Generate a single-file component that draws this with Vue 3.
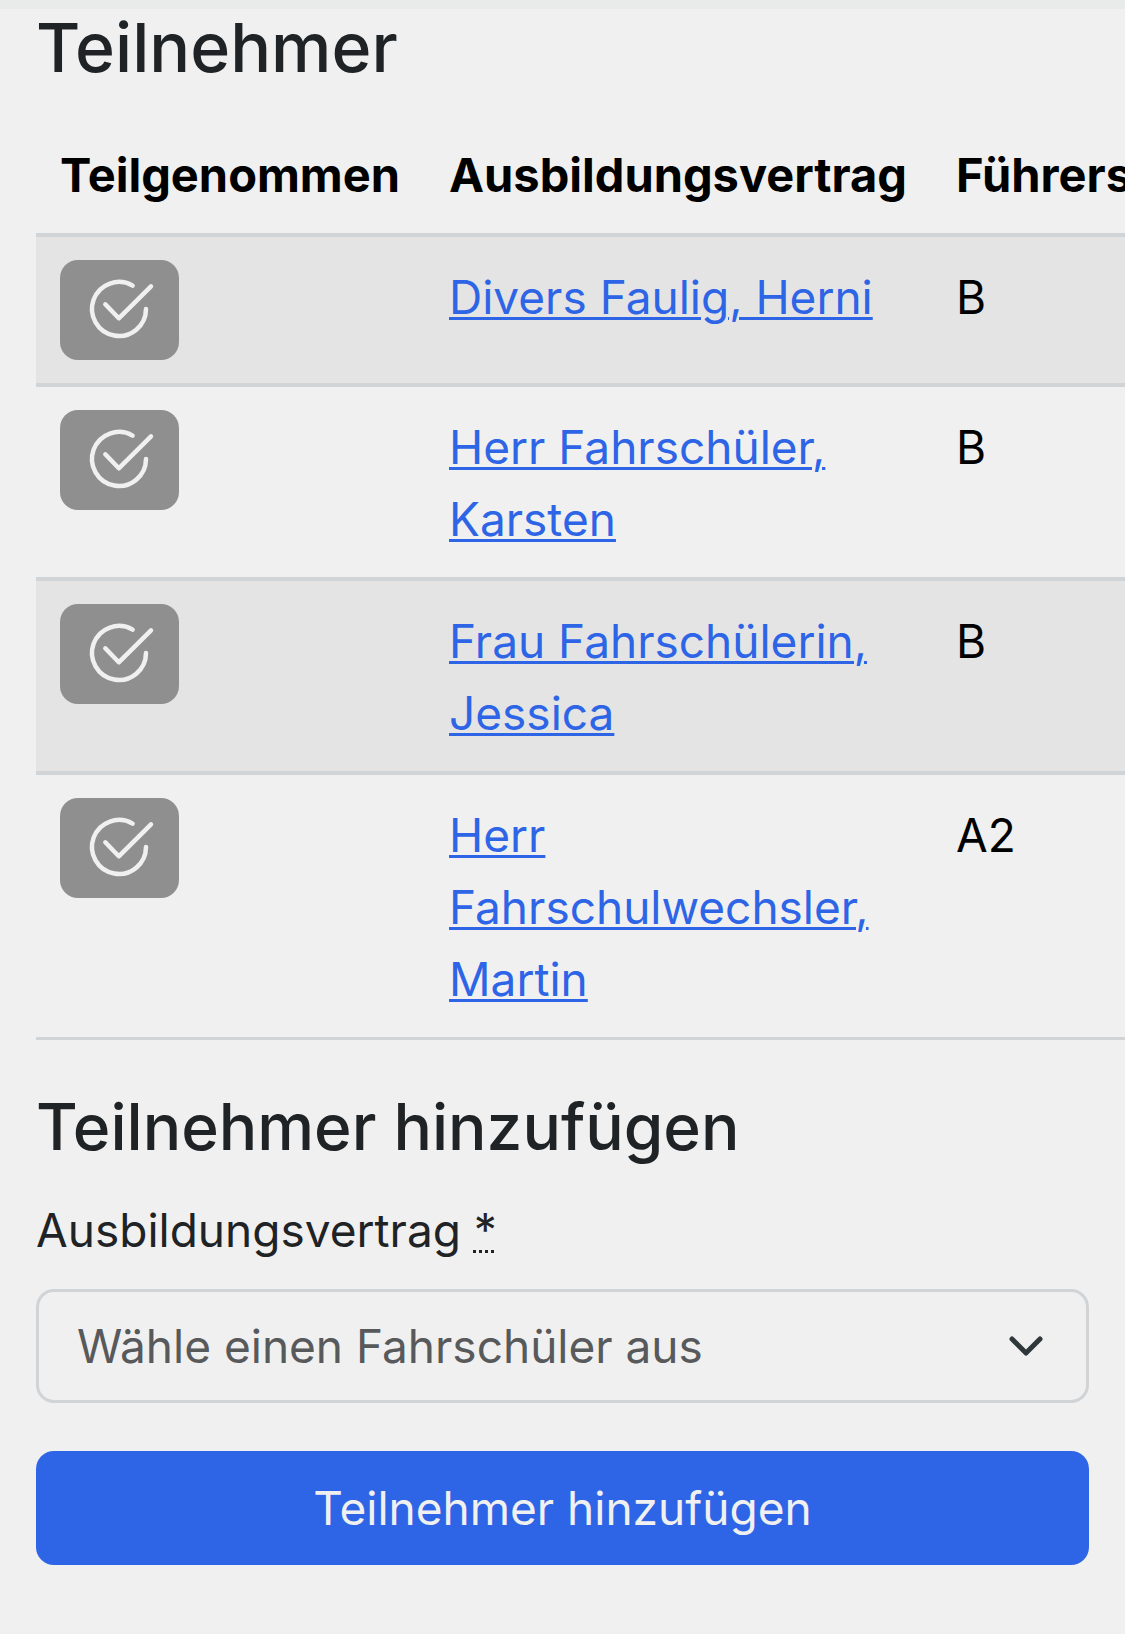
<template>
  <div class="page">
    <div class="topbar"></div>
    <main class="content">
      <h2 class="title">Teilnehmer</h2>

      <div class="table-responsive">
        <table class="table">
          <colgroup>
            <col class="col-attended" />
            <col class="col-contract" />
            <col />
          </colgroup>
          <thead>
            <tr>
              <th scope="col">Teilgenommen</th>
              <th scope="col">Ausbildungsvertrag</th>
              <th scope="col">Führerscheinklasse</th>
            </tr>
          </thead>
          <tbody>
            <tr v-for="item in participants" :key="item.id">
              <td>
                <button
                  type="button"
                  class="btn-check"
                  aria-label="Teilgenommen"
                  :aria-pressed="item.attended"
                  @click="toggleAttended(item)"
                >
                  <svg class="check-icon" viewBox="0 0 71 72" aria-hidden="true">
                    <path d="M62 35a27 27 0 1 1-13.4-23.4" />
                    <path d="M21.3 30.3l13.5 14L67 12.3" />
                  </svg>
                </button>
              </td>
              <td>
                <a href="#">{{ item.name }}</a>
              </td>
              <td>{{ item.license }}</td>
            </tr>
          </tbody>
        </table>
      </div>

      <form @submit.prevent="addParticipant">
        <h3 class="subtitle">Teilnehmer hinzufügen</h3>
        <label class="label" for="contract">
          Ausbildungsvertrag <abbr title="Pflichtfeld">*</abbr>
        </label>
        <div class="select-wrap">
          <select id="contract" v-model="selected" class="select">
            <option value="">Wähle einen Fahrschüler aus</option>
          </select>
          <svg class="chevron" viewBox="0 0 36 24" aria-hidden="true">
            <path d="M4 5l14 14L32 5" />
          </svg>
        </div>
        <button type="submit" class="btn-submit">Teilnehmer hinzufügen</button>
      </form>
    </main>
  </div>
</template>

<script setup>
import { ref } from "vue";

const participants = ref([
  { id: 1, name: "Divers Faulig, Herni", license: "B", attended: false },
  { id: 2, name: "Herr Fahrschüler, Karsten", license: "B", attended: false },
  { id: 3, name: "Frau Fahrschülerin, Jessica", license: "B", attended: false },
  { id: 4, name: "Herr Fahrschulwechsler, Martin", license: "A2", attended: false },
]);

// Selected contract in the form
const selected = ref("");

const toggleAttended = (item) => {
  item.attended = !item.attended;
};

const addParticipant = () => {
  selected.value = "";
};
</script>

<style>
body {
  margin: 0;
  background: #f0f0f0;
}
</style>

<style scoped>
.page {
  overflow: hidden;
  color: #1f2326;
  font-family: Inter, "Liberation Sans", sans-serif;
  font-size: 46px;
  line-height: 72px;
}
.topbar {
  height: 9px;
  background: #e9ebea;
}
.content {
  padding: 0 36px 64px;
}
.title,
.subtitle {
  margin: 0;
  font-weight: 500;
}
.title {
  margin-bottom: 31px;
  font-size: 68px;
  line-height: 76px;
}
.subtitle {
  margin-bottom: 28px;
  font-size: 64px;
  line-height: 78px;
}

/* table runs to the right edge of the window */
.table-responsive {
  margin-right: -36px;
  margin-bottom: 48px;
  overflow-x: auto;
  scrollbar-width: none;
}
.table {
  border-collapse: separate;
  border-spacing: 0;
  table-layout: fixed;
  width: 1420px;
  color: #000;
  border-bottom: 3px solid #d1d4d6;
}
.col-attended {
  width: 389px;
}
.col-contract {
  width: 507px;
}
th,
td {
  padding: 23px 24px;
  text-align: left;
  vertical-align: top;
}
th {
  padding-bottom: 22px;
  font-size: 47px;
  font-weight: 700;
  white-space: nowrap;
}
td {
  border-top: 4px solid #d0d4d7;
}
td + td {
  padding-top: 24px;
  padding-bottom: 22px;
}
tbody tr:nth-child(odd) {
  background: #e4e4e4;
}
a {
  color: #2d65e6;
  text-decoration: underline;
  text-decoration-thickness: 3px;
  text-underline-offset: 3px;
}

.btn-check {
  display: flex;
  align-items: center;
  justify-content: center;
  width: 119px;
  height: 100px;
  padding: 0;
  border: 0;
  border-radius: 18px;
  background: #8f8f8f;
  cursor: pointer;
}
.check-icon {
  width: 71px;
  height: 72px;
  fill: none;
  stroke: #f0f0f0;
  stroke-width: 4.5;
  stroke-linecap: round;
  stroke-linejoin: round;
}

.label {
  display: block;
  margin-bottom: 23px;
}
abbr {
  text-decoration: underline dotted 3px;
  text-underline-offset: 3px;
}
.select-wrap {
  display: grid;
  align-items: center;
  margin-bottom: 48px;
}
.select,
.chevron {
  grid-area: 1 / 1;
}
.select {
  appearance: none;
  width: 100%;
  height: 114px;
  padding: 0 108px 0 38px;
  border: 3px solid #d0d4d7;
  border-radius: 18px;
  background: transparent;
  color: #58595b;
  font: inherit;
}
.chevron {
  justify-self: end;
  width: 36px;
  height: 24px;
  margin-right: 45px;
  fill: none;
  stroke: #30373b;
  stroke-width: 5;
  stroke-linecap: round;
  stroke-linejoin: round;
  pointer-events: none;
}
.btn-submit {
  width: 100%;
  height: 114px;
  padding: 0;
  border: 0;
  border-radius: 18px;
  background: #2d65e6;
  color: #f0f0f0;
  font: inherit;
  cursor: pointer;
}
</style>
